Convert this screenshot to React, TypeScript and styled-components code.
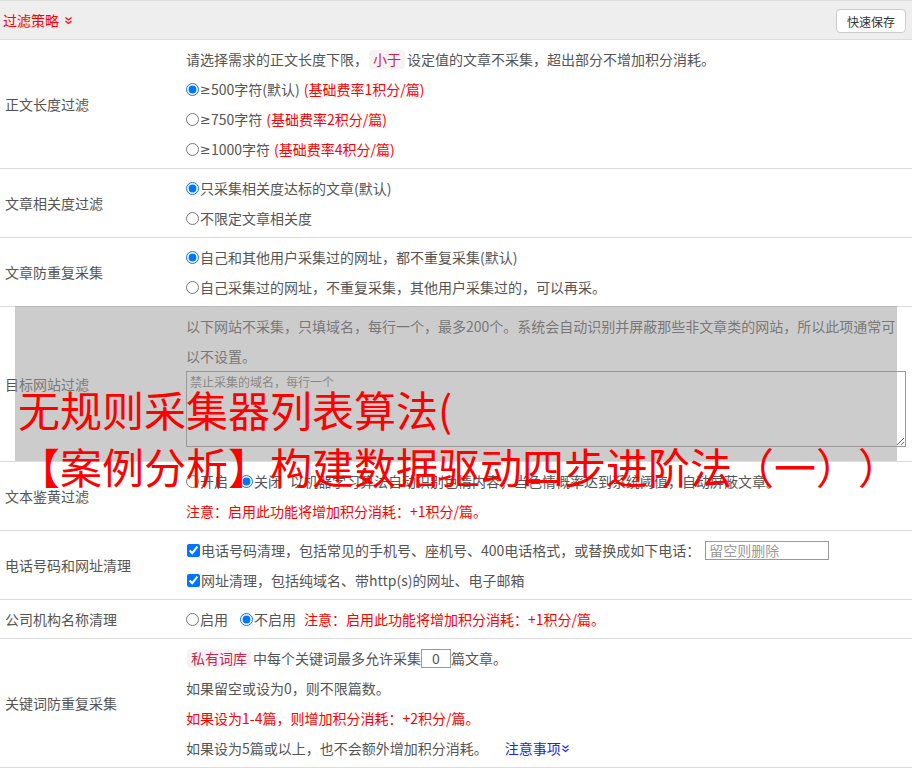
import styled, { createGlobalStyle } from "styled-components";

interface GapProps {
  $gap?: number;
}

const GlobalStyle = createGlobalStyle`
  html, body {
    margin: 0;
    padding: 0;
    overflow: hidden;
    background: #fff;
  }
  body {
    font-family: "Noto Sans CJK SC", "Noto Sans", sans-serif;
    font-size: 14px;
    color: #555;
    text-spacing-trim: space-all;
  }
  * {
    box-sizing: border-box;
  }
`;

function DoubleChevron({ color }: { color: string }) {
  return (
    <svg width="9" height="9" viewBox="0 0 9 9" fill="none" stroke={color} strokeWidth="1.2">
      <path d="M1.5 1.5 L4.5 4 L7.5 1.5" />
      <path d="M1.5 5 L4.5 7.5 L7.5 5" />
    </svg>
  );
}

export default function App() {
  return (
    <Page>
      <GlobalStyle />
      <Header>
        <Title>
          过滤策略
          <DoubleChevron color="#f00" />
        </Title>
        <SaveButton type="button">快速保存</SaveButton>
      </Header>

      <Row>
        <Label>正文长度过滤</Label>
        <Content>
          <Line>
            请选择需求的正文长度下限，<Tag>小于</Tag>设定值的文章不采集，超出部分不增加积分消耗。
          </Line>
          <Line>
            <Option>
              <Radio name="len" defaultChecked />
              <Sym>≥</Sym>500字符(默认)
            </Option>
            <Red $gap={4}>(基础费率1积分/篇)</Red>
          </Line>
          <Line>
            <Option>
              <Radio name="len" />
              <Sym>≥</Sym>750字符
            </Option>
            <Red $gap={4}>(基础费率2积分/篇)</Red>
          </Line>
          <Line>
            <Option>
              <Radio name="len" />
              <Sym>≥</Sym>1000字符
            </Option>
            <Red $gap={4}>(基础费率4积分/篇)</Red>
          </Line>
        </Content>
      </Row>

      <Row>
        <Label>文章相关度过滤</Label>
        <Content>
          <Line>
            <Option>
              <Radio name="rel" defaultChecked />只采集相关度达标的文章(默认)
            </Option>
          </Line>
          <Line>
            <Option>
              <Radio name="rel" />不限定文章相关度
            </Option>
          </Line>
        </Content>
      </Row>

      <Row>
        <Label>文章防重复采集</Label>
        <Content>
          <Line>
            <Option>
              <Radio name="dup" defaultChecked />自己和其他用户采集过的网址，都不重复采集(默认)
            </Option>
          </Line>
          <Line>
            <Option>
              <Radio name="dup" />自己采集过的网址，不重复采集，其他用户采集过的，可以再采。
            </Option>
          </Line>
        </Content>
      </Row>

      <Row>
        <Label>目标网站过滤</Label>
        <Content>
          <Para>
            以下网站不采集，只填域名，每行一个，最多200个。系统会自动识别并屏蔽那些非文章类的网站，所以此项通常可以不设置。
          </Para>
          <DomainBox placeholder="禁止采集的域名，每行一个" />
        </Content>
        <Shade />
      </Row>

      <Row>
        <Label>文本鉴黄过滤</Label>
        <Content>
          <Line>
            <Option $gap={12}>
              <Radio name="porn" />开启
            </Option>
            <Option>
              <Radio name="porn" defaultChecked />关闭
            </Option>
            <Note $gap={8}>
              以机器学习算法自动识别色情内容，当色情概率达到系统阈值，自动屏蔽文章。
            </Note>
          </Line>
          <Line>
            <Red>注意：启用此功能将增加积分消耗：+1积分/篇。</Red>
          </Line>
        </Content>
      </Row>

      <Row>
        <Label>电话号码和网址清理</Label>
        <Content>
          <Line>
            <Option>
              <Check defaultChecked />电话号码清理，包括常见的手机号、座机号、400电话格式，或替换成如下电话：
            </Option>
            <PhoneInput placeholder="留空则删除" />
          </Line>
          <Line>
            <Option>
              <Check defaultChecked />网址清理，包括纯域名、带http(s)的网址、电子邮箱
            </Option>
          </Line>
        </Content>
      </Row>

      <Row>
        <Label>公司机构名称清理</Label>
        <Content>
          <Line>
            <Option $gap={12}>
              <Radio name="org" />启用
            </Option>
            <Option>
              <Radio name="org" defaultChecked />不启用
            </Option>
            <Red $gap={8}>注意：启用此功能将增加积分消耗：+1积分/篇。</Red>
          </Line>
        </Content>
      </Row>

      <Row>
        <Label>关键词防重复采集</Label>
        <Content>
          <Line>
            <Tag>私有词库</Tag>中每个关键词最多允许采集
            <CountInput defaultValue="0" />
            篇文章。
          </Line>
          <Line>如果留空或设为0，则不限篇数。</Line>
          <Line>
            <Red>如果设为1-4篇，则增加积分消耗：+2积分/篇。</Red>
          </Line>
          <Line>
            如果设为5篇或以上，也不会额外增加积分消耗。
            <MoreLink href="#">
              注意事项
              <DoubleChevron color="#22e" />
            </MoreLink>
          </Line>
        </Content>
      </Row>

      <BigTitle>
        <div>无规则采集器列表算法(</div>
        <div>【案例分析】构建数据驱动四步进阶法（一））</div>
      </BigTitle>
    </Page>
  );
}

const Page = styled.div`
  position: relative;
  width: 912px;
  height: 768px;
  overflow: hidden;
`;

const Header = styled.div`
  display: flex;
  align-items: center;
  justify-content: space-between;
  height: 40px;
  padding: 0 6px 0 3px;
  background: #eee;
  border-top: 1px solid #ddd;
  border-bottom: 1px solid #ddd;
`;

const Title = styled.div`
  display: flex;
  align-items: center;
  gap: 5px;
  color: #f00;
  font-size: 14px;
`;

const SaveButton = styled.button`
  height: 24px;
  padding: 0 10px;
  margin-top: 2px;
  font-family: inherit;
  font-size: 12px;
  color: #333;
  background: #fff;
  border: 1px solid #ccc;
  border-radius: 4px;
`;

const Row = styled.div`
  position: relative;
  display: flex;
  align-items: center;
  border-bottom: 1px solid #ddd;
`;

const Label = styled.div`
  flex: none;
  width: 186px;
  padding-left: 5px;
  line-height: 30px;
`;

const Content = styled.div`
  flex: 1;
  min-width: 0;
  padding: 4px 6px 4px 0;
`;

const Line = styled.div`
  display: flex;
  align-items: center;
  height: 30px;
  white-space: nowrap;
`;

const Para = styled.p`
  margin: 0;
  line-height: 30px;
`;

const Option = styled.label<GapProps>`
  display: inline-flex;
  align-items: center;
  margin-right: ${(p) => p.$gap ?? 0}px;
`;

const Sym = styled.span`
  font-family: "DejaVu Sans", sans-serif;
  font-size: 13px;
`;

const Radio = styled.input.attrs({ type: "radio" })`
  width: 13px;
  height: 13px;
  margin: 0 1px 0 0;
`;

const Check = styled.input.attrs({ type: "checkbox" })`
  width: 13px;
  height: 13px;
  margin: 0 1px 0 1px;
`;

const Red = styled.span<GapProps>`
  color: #f00;
  margin-left: ${(p) => p.$gap ?? 0}px;
`;

const Note = styled.span<GapProps>`
  margin-left: ${(p) => p.$gap ?? 0}px;
`;

const Tag = styled.span`
  display: inline-block;
  margin: 0 2px 0 1px;
  padding: 0 4px;
  line-height: 19px;
  color: #c7254e;
  background: #f9f2f4;
  border-radius: 4px;
`;

const PhoneInput = styled.input`
  width: 124px;
  height: 19px;
  margin-left: 5px;
  padding: 0 3px;
  font-family: inherit;
  font-size: 14px;
  color: #555;
  border: 1px solid #999;
  outline: none;

  &::placeholder {
    color: #999;
  }
`;

const CountInput = styled.input`
  width: 30px;
  height: 19px;
  padding: 0;
  font-family: inherit;
  font-size: 14px;
  color: #555;
  text-align: center;
  border: 1px solid #999;
  outline: none;
`;

const DomainBox = styled.textarea`
  display: block;
  width: 100%;
  height: 76px;
  margin: 0 0 10px;
  padding: 1px 3px;
  font-family: inherit;
  font-size: 12px;
  color: #555;
  border: 1px solid #999;
  resize: vertical;
`;

const Shade = styled.div`
  position: absolute;
  left: 15px;
  right: 15px;
  top: -1px;
  bottom: 0;
  background: rgba(153, 153, 153, 0.5);
  pointer-events: none;
`;

const MoreLink = styled.a`
  display: inline-flex;
  align-items: center;
  margin-left: 17px;
  color: #22e;
  text-decoration: none;
`;

const BigTitle = styled.div`
  position: absolute;
  left: 18px;
  top: 380px;
  z-index: 5;
  font-size: 42px;
  line-height: 57px;
  color: #f00;
  white-space: nowrap;
  text-spacing-trim: space-all;
  pointer-events: none;
`;
